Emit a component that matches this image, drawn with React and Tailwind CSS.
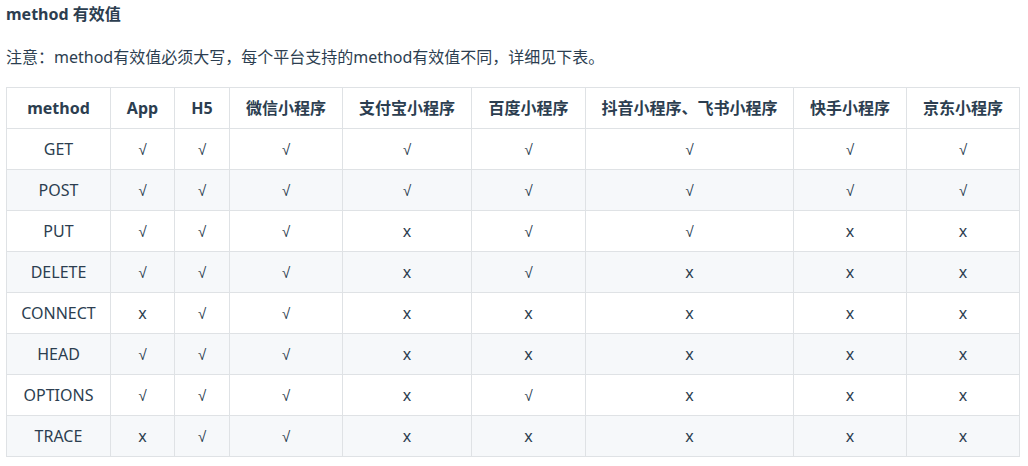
import React from 'react';

const cols = [
    { name: 'method', w: 'w-[104px]' },
    { name: 'App', w: 'w-[64px]' },
    { name: 'H5', w: 'w-[55px]' },
    { name: '微信小程序', w: 'w-[113px]' },
    { name: '支付宝小程序', w: 'w-[129px]' },
    { name: '百度小程序', w: 'w-[114px]' },
    { name: '抖音小程序、飞书小程序', w: 'w-[208px]' },
    { name: '快手小程序', w: 'w-[113px]' },
    { name: '京东小程序', w: 'w-[113px]' },
];

const rows = [
    ['GET', '√', '√', '√', '√', '√', '√', '√', '√'],
    ['POST', '√', '√', '√', '√', '√', '√', '√', '√'],
    ['PUT', '√', '√', '√', 'x', '√', '√', 'x', 'x'],
    ['DELETE', '√', '√', '√', 'x', '√', 'x', 'x', 'x'],
    ['CONNECT', 'x', '√', '√', 'x', 'x', 'x', 'x', 'x'],
    ['HEAD', '√', '√', '√', 'x', 'x', 'x', 'x', 'x'],
    ['OPTIONS', '√', '√', '√', 'x', '√', 'x', 'x', 'x'],
    ['TRACE', 'x', '√', '√', 'x', 'x', 'x', 'x', 'x'],
];

const App = () => {
    return (
        <div className="w-[1028px] h-[466px] bg-white text-[#2c3e50] px-[6px] font-['Segoe_UI','Noto_Sans','Noto_Sans_CJK_SC',sans-serif] text-[16px] overflow-hidden">
            <h3 className="font-bold leading-[28px]">method 有效值</h3>
            <p className="mt-[15px] leading-[28px]">注意：method有效值必须大写，每个平台支持的method有效值不同，详细见下表。</p>
            <table className="mt-[16px] border-collapse table-fixed w-[1013px]">
                <thead>
                    <tr className="h-[41px]">
                        {cols.map(c => (
                            <th key={c.name} className={`${c.w} border border-[#dfe2e5] font-bold text-center px-0`}>{c.name}</th>
                        ))}
                    </tr>
                </thead>
                <tbody>
                    {rows.map((r, i) => (
                        <tr key={r[0]} className={`h-[41px] ${i % 2 === 1 ? 'bg-[#f6f8fa]' : 'bg-white'}`}>
                            {r.map((v, j) => (
                                <td key={j} className="border border-[#dfe2e5] text-center">
                                    {v === '√' ? <span className="font-['Liberation_Sans',sans-serif] text-[15px]">√</span> : v}
                                </td>
                            ))}
                        </tr>
                    ))}
                </tbody>
            </table>
        </div>
    );
};

export default App;
